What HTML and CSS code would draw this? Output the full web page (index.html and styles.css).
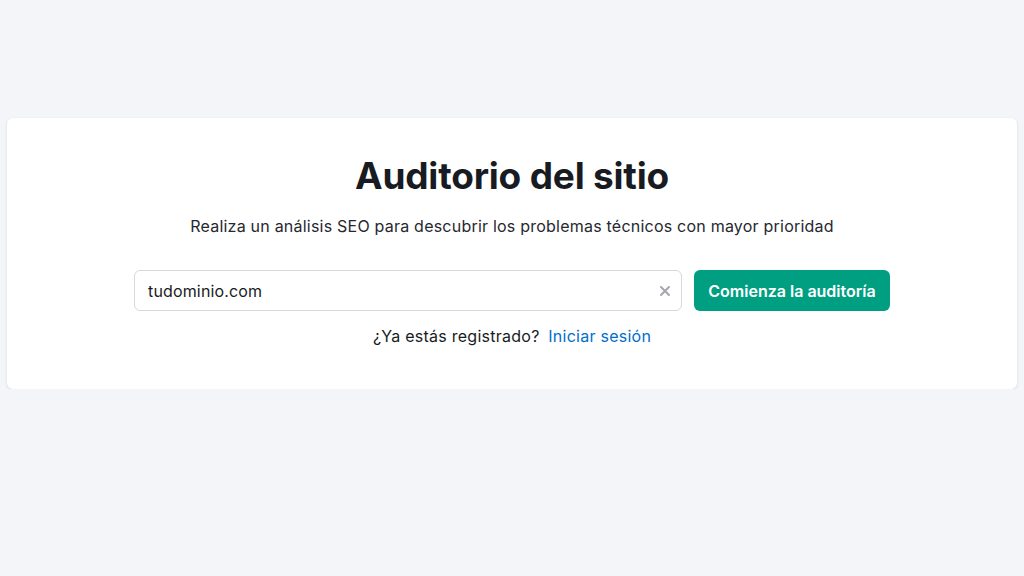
FILE: index.html
```html
<!DOCTYPE html>
<html lang="es">
<head>
    <meta charset="utf-8">
    <title>Auditorio del sitio</title>
    <link rel="stylesheet" href="styles.css">
</head>
<body>

    <!-- Audit card -->
    <div class="card">
        <h1>Auditorio del sitio</h1>
        <p class="lead">Realiza un análisis SEO para descubrir los problemas técnicos con mayor prioridad</p>

        <form class="audit-form" onsubmit="return false;">
            <div class="field">
                <input type="text" value="tudominio.com">
                <span class="clear">
                    <svg width="12" height="12" viewBox="0 0 12 12">
                        <path d="M2 2 L10 10 M10 2 L2 10" stroke="#a4a6ad" stroke-width="2" stroke-linecap="round"/>
                    </svg>
                </span>
            </div>
            <button class="start-btn">Comienza la auditoría</button>
        </form>

        <p class="login">¿Ya estás registrado? <a href="#">Iniciar sesión</a></p>
    </div>

</body>
</html>
```
FILE: styles.css
```css
body {
    margin: 0;
    font-family: Inter, "Noto Sans", sans-serif;
    background-color: #f4f5f9;
    color: #191b23;
}

.card {
    margin: 118px 7px 0 7px;
    height: 271px;
    box-sizing: border-box;
    background-color: #fff;
    border-radius: 6px;
    box-shadow: 0 1px 3px rgba(25, 27, 35, 0.12);
    padding-top: 35px;
    text-align: center;
}

.card h1 {
    margin: 0;
    font-size: 37px;
    font-weight: 700;
    letter-spacing: -0.2px;
    line-height: 46px;
}

.lead {
    margin: 16px 0 0 0;
    font-size: 16px;
    line-height: 22px;
    letter-spacing: 0.22px;
    color: #26282f;
}

.audit-form {
    display: flex;
    justify-content: center;
    gap: 12px;
    margin-top: 33px;
}

.field {
    position: relative;
    width: 548px;
}

.field input {
    width: 100%;
    height: 41px;
    box-sizing: border-box;
    border: 1px solid #d7d8db;
    border-radius: 6px;
    padding: 0 40px 0 13px;
    font-family: Inter, "Noto Sans", sans-serif;
    font-size: 16px;
    letter-spacing: 0.15px;
    color: #191b23;
    outline: none;
}

.clear {
    position: absolute;
    right: 11px;
    top: 15px;
    display: block;
    line-height: 0;
}

.start-btn {
    height: 41px;
    width: 196px;
    border: none;
    border-radius: 6px;
    background-color: #009f81;
    color: #fff;
    font-family: Inter, "Noto Sans", sans-serif;
    font-size: 16px;
    font-weight: 600;
    cursor: pointer;
}

.login {
    margin: 14px 0 0 0;
    font-size: 16px;
    line-height: 22px;
    letter-spacing: 0.25px;
    color: #191b23;
}

.login a {
    color: #006dca;
    text-decoration: none;
    margin-left: 4px;
}
```
